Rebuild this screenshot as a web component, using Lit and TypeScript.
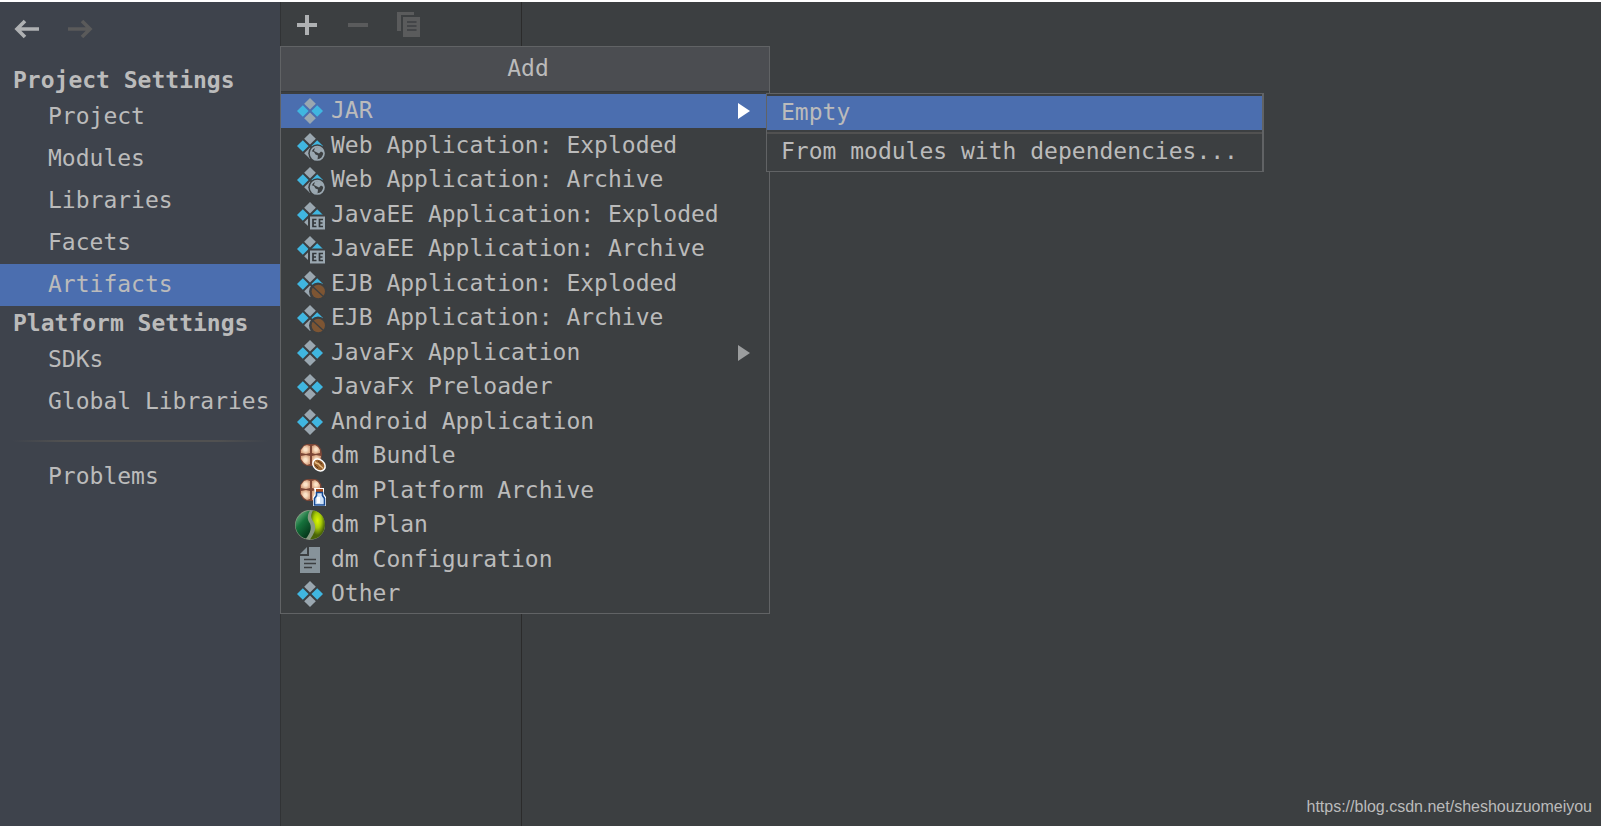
import { LitElement, html, svg, css, nothing } from "lit";
import { customElement, property, state } from "lit/decorators.js";
import { classMap } from "lit/directives/class-map.js";

type IconName = "artifact" | "web" | "javaee" | "ejb" | "bundle" | "platform" | "plan" | "config";

interface MenuEntry {
  label: string;
  icon: IconName;
  children?: string[];
}

const ENTRIES: MenuEntry[] = [
  { label: "JAR", icon: "artifact", children: ["Empty", "From modules with dependencies..."] },
  { label: "Web Application: Exploded", icon: "web" },
  { label: "Web Application: Archive", icon: "web" },
  { label: "JavaEE Application: Exploded", icon: "javaee" },
  { label: "JavaEE Application: Archive", icon: "javaee" },
  { label: "EJB Application: Exploded", icon: "ejb" },
  { label: "EJB Application: Archive", icon: "ejb" },
  { label: "JavaFx Application", icon: "artifact", children: [] },
  { label: "JavaFx Preloader", icon: "artifact" },
  { label: "Android Application", icon: "artifact" },
  { label: "dm Bundle", icon: "bundle" },
  { label: "dm Platform Archive", icon: "platform" },
  { label: "dm Plan", icon: "plan" },
  { label: "dm Configuration", icon: "config" },
  { label: "Other", icon: "artifact" },
];

const SECTIONS = [
  { title: "Project Settings", items: ["Project", "Modules", "Libraries", "Facets", "Artifacts"] },
  { title: "Platform Settings", items: ["SDKs", "Global Libraries"] },
];

const artifactBase = svg`
  <path d="M15 2l5.800 5.800L15 13.600 9.200 7.800z" fill="#9aa7b0"/>
  <path d="M15 16.400l5.800 5.800L15 28l-5.800-5.800z" fill="#9aa7b0"/>
  <path d="M7.800 9.200l5.800 5.800-5.800 5.800L2 15z" fill="#40b6e0"/>
  <path d="M22.200 9.200L28 15l-5.800 5.800-5.800-5.800z" fill="#40b6e0"/>`;

const sponge = svg`
  <defs><radialGradient id="lobe"><stop offset="0.300" stop-color="#fbe3c8"/><stop offset="1" stop-color="#d9a684"/></radialGradient></defs>
  <path d="M9 4l3-1h8l3 1 3 4 1 5-1 7-4 4-3 1h-7l-4-2-3-5V9z" fill="#7b4636"/>
  <g fill="url(#lobe)">
    <path d="M9 5l3-1 3 1v7l-4 1-5-1V9z"/>
    <path d="M17 5l3-1 3 2 2 3v3l-5 1-3-1z"/>
    <path d="M6 15l5-1 4 1v8l-3 1-3-2-3-4z"/>
    <path d="M17 15l4-1 5 1-1 5-3 3-5 1z"/>
  </g>`;

const PICTURES: Record<IconName, unknown> = {
  artifact: artifactBase,
  web: svg`${artifactBase}
    <circle cx="22.300" cy="22.300" r="9" fill="#3c3f41"/>
    <circle cx="22.300" cy="22.300" r="6.700" fill="none" stroke="#9aa7b0" stroke-width="1.700"/>
    <path d="M16 20l3 1 1.500 2.500 2.500 1-.5 4C18 29 15 25 16 20zM20 16.500l4-.5 4 3 .5 3-2.500-1.500-2 2-3-1.500-2-1z" fill="#9aa7b0"/>`,
  javaee: svg`${artifactBase}
    <path d="M13 14.500h17v15.500H13z" fill="#3c3f41"/>
    <path d="M15 16.500h15v13H15z" fill="#9aa7b0"/>
    <path d="M21.500 19.500h-3.500v7h3.500M18 23h3M28 19.500h-3.500v7h3.500M24.500 23h3" fill="none" stroke="#33373a" stroke-width="1.700"/>`,
  ejb: svg`${artifactBase}
    <circle cx="23" cy="22.500" r="9" fill="#3c3f41"/>
    <circle cx="23.300" cy="22.500" r="6.700" fill="#7d5533"/>
    <path d="M17 17l13 12" stroke="#3c3f41" stroke-width="1.400"/>`,
  bundle: svg`${sponge}
    <ellipse cx="24" cy="24" rx="7.500" ry="6" fill="#fff" transform="rotate(40 24 24)"/>
    <ellipse cx="24" cy="24" rx="6" ry="4.500" fill="#9a6430" transform="rotate(40 24 24)"/>
    <path d="M20 20.500c1 3 3 1 4 3s3 2 4 4" fill="none" stroke="#e8bd84" stroke-width="1.500"/>
    <path d="M23 20l4 3M20 24l3 3" stroke="#5d3414" stroke-width="1"/>`,
  platform: svg`${sponge}
    <path d="M19 12h10v6l2 3v9H18v-9l2-3z" fill="#fff"/>
    <path d="M21 13h7v3h-7z" fill="#a34d22"/>
    <path d="M21.500 16.500v3l-2 3v6.500h10v-6.500l-2-3v-3z" fill="#cfe2f8" stroke="#164a94" stroke-width="1.600"/>
    <path d="M22 21h3v6h-3z" fill="#fff"/>`,
  plan: svg`
    <defs>
      <linearGradient id="dark" x1="0" y1="0" x2="0.600" y2="1"><stop stop-color="#8fc79c"/><stop offset="0.500" stop-color="#15713b"/><stop offset="1" stop-color="#06391c"/></linearGradient>
      <radialGradient id="lime" cx="0.500" cy="0.350"><stop stop-color="#dcf500"/><stop offset="0.500" stop-color="#a8cc08"/><stop offset="1" stop-color="#4a6508"/></radialGradient>
    </defs>
    <circle cx="15" cy="15" r="15" fill="#8a9a83"/>
    <path d="M15 .5c-3 5-3 9 0 13 2 5 0 10-4 15C-3 25-4 3 15 .5z" fill="url(#dark)"/>
    <path d="M18 .5c-3 5-2 8 1 12 3 6 0 11-4 17C35 29 34 2 18 .5z" fill="url(#lime)"/>`,
  config: svg`
    <path d="M14 2h11v26H5V11h9z" fill="#87939a"/>
    <path d="M12 2v7H5z" fill="#87939a"/>
    <path d="M9 14.500h12M9 18.500h12M9 22.500h8" stroke="#3c3f41" stroke-width="1.600"/>`,
};

@customElement("menu-icon")
class MenuIcon extends LitElement {
  @property() name: IconName = "artifact";

  static styles = css`
    :host { display: block; flex: none; width: 30px; height: 30px; }
    .picture { display: block; width: 30px; height: 30px; overflow: visible; }
  `;

  render() {
    return html`<svg class="picture" viewBox="0 0 30 30" aria-hidden="true">${PICTURES[this.name]}</svg>`;
  }
}

@customElement("app-root")
class AppRoot extends LitElement {
  @state() private section = "Artifacts";
  @state() private entry = "JAR";

  static styles = css`
    :host {
      display: block;
      font-family: "DejaVu Sans Mono", "Liberation Mono", monospace;
      font-size: 23px;
      line-height: 28px;
      color: #bbbbbb;
    }
    * { box-sizing: border-box; }
    button { font: inherit; color: inherit; background: none; border: 0; margin: 0; padding: 0; text-align: left; white-space: pre; }
    ul { list-style: none; margin: 0; padding: 0; }
    .window { display: grid; grid-template-columns: 280px 242px 1fr; min-height: 100vh; border-top: 2px solid #ffffff; background: #3c3f41; }
    .sidebar { background: #3e434c; }
    .history { display: flex; gap: 24px; height: 61px; padding: 12px 12px 0; align-items: flex-start; }
    .history svg, .toolbar svg { display: block; }
    .heading { margin: 0; padding: 0 13px; height: 33px; font-size: 23px; line-height: 35px; font-weight: bold; white-space: pre; }
    .link { display: block; width: 100%; height: 42px; padding: 0 0 2px 48px; }
    .selected { background: #4b6eaf; }
    .divider { height: 2px; margin: 17px 12px 14px; border: 0; background: linear-gradient(90deg, transparent, #515151 20%, #515151 80%, transparent); }
    .list { position: relative; border-left: 1px solid #313335; border-right: 1px solid #2b2b2b; }
    .toolbar { display: flex; gap: 20px; height: 44px; padding: 8px 11px 0; align-items: flex-start; }
    .toolbar { padding-top: 6px; }
    .popup { position: absolute; z-index: 1; top: 44px; left: -1px; min-width: 490px; background: #3c3f41; border: 1px solid #616365; padding-bottom: 2px; }
    .title { margin: 0; height: 45px; padding-left: 6px; font-size: 23px; line-height: 42px; font-weight: normal; text-align: center; background: #4b4d51; border-bottom: 1px solid #35383a; }
    .entries { padding-top: 2px; }
    .entry { position: relative; }
    .row { display: flex; align-items: center; gap: 6px; width: 100%; height: 34px; padding: 0 18px 0 14px; }
    .entry:nth-child(even) .row { height: 35px; }
    .name { flex: 1; padding-bottom: 2px; }
    .arrow { display: block; fill: #9b9d9e; }
    .selected .arrow { fill: #ffffff; }
    .submenu { position: absolute; z-index: 2; top: -1px; left: calc(100% - 3px); background: #3c3f41; border: 1px solid #616365; border-right-width: 2px; padding-top: 2px; }
    .choice { display: block; width: 100%; height: 34px; padding: 0 24px 2px 14px; }
    .rule { height: 2px; margin: 2px 0 1px; border: 0; background: #515151; }
    .submenu { padding-bottom: 2px; }
    .editor { display: flex; align-items: flex-end; justify-content: flex-end; padding: 0 9px 9px; }
    .source { font-family: "Liberation Sans", Arial, sans-serif; font-size: 16px; line-height: 20px; color: #bbbbbb; text-decoration: none; }
  `;

  private link(label: string) {
    return html`<button class=${classMap({ link: true, selected: this.section === label })}
      @click=${() => (this.section = label)}>${label}</button>`;
  }

  private menuEntry(item: MenuEntry) {
    const open = this.entry === item.label;
    return html`<li class="entry">
      <button class=${classMap({ row: true, selected: open })} @click=${() => (this.entry = item.label)}>
        <menu-icon .name=${item.icon}></menu-icon><span class="name">${item.label}</span>
        ${item.children
          ? html`<svg class="arrow" width="13" height="16" viewBox="0 0 13 16" aria-hidden="true"><path d="M0 0l12 8-12 8z"/></svg>`
          : nothing}
      </button>
      ${open && item.children?.length
        ? html`<div class="submenu">${item.children.map(
            (child, i) => html`${i ? html`<hr class="rule">` : nothing}<button
              class=${classMap({ choice: true, selected: i === 0 })}>${child}</button>`
          )}</div>`
        : nothing}
    </li>`;
  }

  render() {
    return html`<div class="window">
      <nav class="sidebar" aria-label="Settings">
        <div class="history">
          <button aria-label="Back"><svg width="29" height="30" viewBox="0 0 29 30"><path d="M27 15H5M13 7l-8 8 8 8" fill="none" stroke="#afb1b3" stroke-width="3.600"/></svg></button>
          <button aria-label="Forward" disabled><svg width="29" height="30" viewBox="0 0 29 30"><path d="M3 15h22M17 7l8 8-8 8" fill="none" stroke="#5a5a5a" stroke-width="3.600"/></svg></button>
        </div>
        ${SECTIONS.map((s) => html`<h2 class="heading">${s.title}</h2>${s.items.map((i) => this.link(i))}`)}
        <hr class="divider">
        ${this.link("Problems")}
      </nav>
      <section class="list" aria-label="Artifacts">
        <div class="toolbar">
          <button aria-label="Add"><svg width="30" height="30" viewBox="0 0 30 30"><path d="M15 7v20M5 17h20" stroke="#afb1b3" stroke-width="4" transform="translate(0 0)"/></svg></button>
          <button aria-label="Remove" disabled><svg width="30" height="30" viewBox="0 0 30 30"><path d="M6 17h20" stroke="#5a5b5c" stroke-width="4"/></svg></button>
          <button aria-label="Copy" disabled><svg width="30" height="30" viewBox="0 0 30 30"><path d="M5 4h17v3H9v16H5z" fill="#5a5b5c"/><path d="M11 9h17v20H11z" fill="#5a5b5c"/><path d="M15 14h9.500M15 18h9.500M15 22h9.500" stroke="#3c3f41" stroke-width="1.700"/></svg></button>
        </div>
        <div class="popup">
          <h1 class="title">Add</h1>
          <ul class="entries">${ENTRIES.map((e) => this.menuEntry(e))}</ul>
        </div>
      </section>
      <main class="editor">
        <a class="source" href="https://blog.csdn.net/sheshouzuomeiyou">https://blog.csdn.net/sheshouzuomeiyou</a>
      </main>
    </div>`;
  }
}
